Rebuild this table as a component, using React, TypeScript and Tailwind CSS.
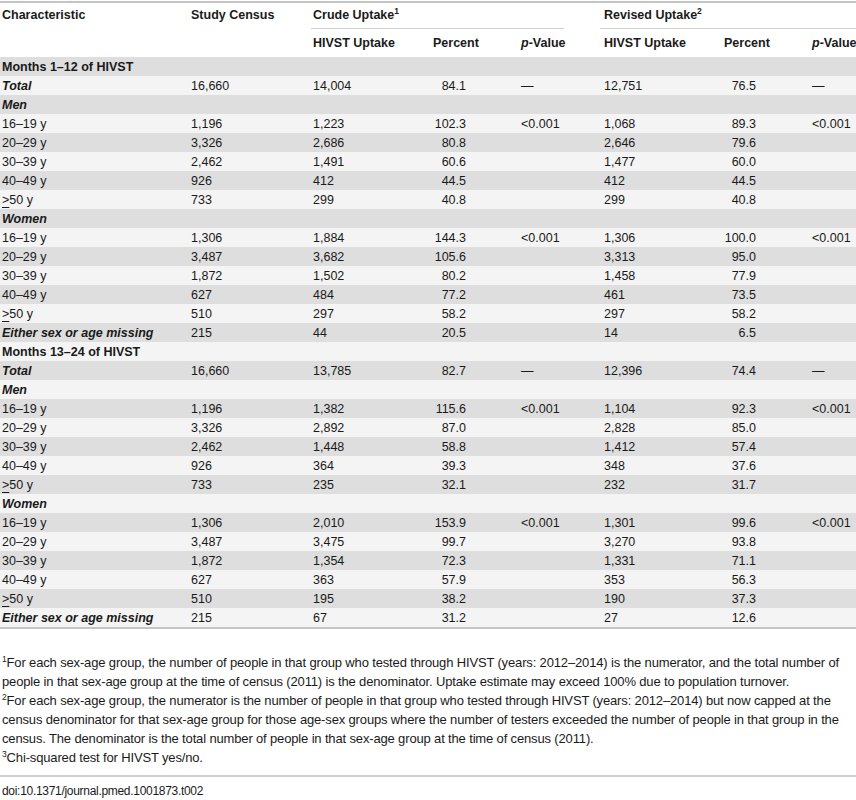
const cols = 'grid grid-cols-[189px_122px_120px_88px_83px_120px_88px_46px]'

type Row =
  | { kind: 'section'; label: string }
  | { kind: 'group'; label: string }
  | { kind: 'data'; label: string; bold?: boolean; vals: string[] }

const rows: Row[] = [
  { kind: 'section', label: 'Months 1–12 of HIVST' },
  { kind: 'data', label: 'Total', bold: true, vals: ['16,660', '14,004', '84.1', '—', '12,751', '76.5', '—'] },
  { kind: 'group', label: 'Men' },
  { kind: 'data', label: '16–19 y', vals: ['1,196', '1,223', '102.3', '<0.001', '1,068', '89.3', '<0.001'] },
  { kind: 'data', label: '20–29 y', vals: ['3,326', '2,686', '80.8', '', '2,646', '79.6', ''] },
  { kind: 'data', label: '30–39 y', vals: ['2,462', '1,491', '60.6', '', '1,477', '60.0', ''] },
  { kind: 'data', label: '40–49 y', vals: ['926', '412', '44.5', '', '412', '44.5', ''] },
  { kind: 'data', label: '≥50 y', vals: ['733', '299', '40.8', '', '299', '40.8', ''] },
  { kind: 'group', label: 'Women' },
  { kind: 'data', label: '16–19 y', vals: ['1,306', '1,884', '144.3', '<0.001', '1,306', '100.0', '<0.001'] },
  { kind: 'data', label: '20–29 y', vals: ['3,487', '3,682', '105.6', '', '3,313', '95.0', ''] },
  { kind: 'data', label: '30–39 y', vals: ['1,872', '1,502', '80.2', '', '1,458', '77.9', ''] },
  { kind: 'data', label: '40–49 y', vals: ['627', '484', '77.2', '', '461', '73.5', ''] },
  { kind: 'data', label: '≥50 y', vals: ['510', '297', '58.2', '', '297', '58.2', ''] },
  { kind: 'data', label: 'Either sex or age missing', bold: true, vals: ['215', '44', '20.5', '', '14', '6.5', ''] },
  { kind: 'section', label: 'Months 13–24 of HIVST' },
  { kind: 'data', label: 'Total', bold: true, vals: ['16,660', '13,785', '82.7', '—', '12,396', '74.4', '—'] },
  { kind: 'group', label: 'Men' },
  { kind: 'data', label: '16–19 y', vals: ['1,196', '1,382', '115.6', '<0.001', '1,104', '92.3', '<0.001'] },
  { kind: 'data', label: '20–29 y', vals: ['3,326', '2,892', '87.0', '', '2,828', '85.0', ''] },
  { kind: 'data', label: '30–39 y', vals: ['2,462', '1,448', '58.8', '', '1,412', '57.4', ''] },
  { kind: 'data', label: '40–49 y', vals: ['926', '364', '39.3', '', '348', '37.6', ''] },
  { kind: 'data', label: '≥50 y', vals: ['733', '235', '32.1', '', '232', '31.7', ''] },
  { kind: 'group', label: 'Women' },
  { kind: 'data', label: '16–19 y', vals: ['1,306', '2,010', '153.9', '<0.001', '1,301', '99.6', '<0.001'] },
  { kind: 'data', label: '20–29 y', vals: ['3,487', '3,475', '99.7', '', '3,270', '93.8', ''] },
  { kind: 'data', label: '30–39 y', vals: ['1,872', '1,354', '72.3', '', '1,331', '71.1', ''] },
  { kind: 'data', label: '40–49 y', vals: ['627', '363', '57.9', '', '353', '56.3', ''] },
  { kind: 'data', label: '≥50 y', vals: ['510', '195', '38.2', '', '190', '37.3', ''] },
  { kind: 'data', label: 'Either sex or age missing', bold: true, vals: ['215', '67', '31.2', '', '27', '12.6', ''] },
]

const PHead = () => (
  <span>
    <i>p</i>-Value
  </span>
)

// the ≥ in the source is drawn as a ">" sitting on a rule
const Label = ({ text }: { text: string }) =>
  text.startsWith('≥') ? (
    <>
      <span className="underline underline-offset-[3px] decoration-1">&gt;</span>
      {text.slice(1)}
    </>
  ) : (
    <>{text}</>
  )

const Sup = ({ n }: { n: string }) => <sup className="text-[8.5px] -top-[5px]">{n}</sup>

const App = () => {
  return (
    <div className="w-[856px] h-[800px] overflow-hidden bg-white text-[12.5px] text-[#1a1a1a] font-['Liberation_Sans',Arial,sans-serif]">
      <div className="h-px" />
      <div className="border-t-2 border-[#c4c4c4]">
        {/* header */}
        <div className={`${cols} font-bold h-[25px] items-center`}>
          <div className="pl-[2px]">Characteristic</div>
          <div className="pl-[2px]">Study Census</div>
          <div className="col-span-3 pl-[2px]">
            Crude Uptake<Sup n="1" />
          </div>
          <div className="col-span-3 pl-[2px]">
            Revised Uptake<Sup n="2" />
          </div>
        </div>
        <div className="flex h-px">
          <div className="w-[311px]" />
          <div className="w-[253px] bg-[#d0d0d0]" />
          <div className="w-[36px]" />
          <div className="flex-1 bg-[#d0d0d0]" />
        </div>
        <div className={`${cols} font-bold h-[28px] items-center`}>
          <div />
          <div />
          <div className="pl-[2px]">HIVST Uptake</div>
          <div className="pl-[2px]">Percent</div>
          <div className="pl-[2px]">
            <PHead />
          </div>
          <div className="pl-[2px]">HIVST Uptake</div>
          <div className="pl-[2px]">Percent</div>
          <div className="pl-[2px] whitespace-nowrap">
            <PHead />
          </div>
        </div>

        {/* body */}
        {rows.map((row, i) => (
          <div
            key={i}
            className={`${cols} h-[19px] pt-px items-center ${i % 2 === 0 ? 'bg-[#dedede]' : 'bg-[#f4f4f4]'}`}
          >
            {row.kind === 'section' && <div className="col-span-8 pl-[2px] font-bold">{row.label}</div>}
            {row.kind === 'group' && <div className="col-span-8 pl-[2px] font-bold italic">{row.label}</div>}
            {row.kind === 'data' && (
              <>
                <div className={`pl-[2px] whitespace-nowrap ${row.bold ? 'font-bold italic' : ''}`}>
                  <Label text={row.label} />
                </div>
                <div className="pl-[2px]">{row.vals[0]}</div>
                <div className="pl-[2px]">{row.vals[1]}</div>
                <div className="text-right pr-[53px]">{row.vals[2]}</div>
                <div className="pl-[2px]">{row.vals[3]}</div>
                <div className="pl-[2px]">{row.vals[4]}</div>
                <div className="text-right pr-[54px]">{row.vals[5]}</div>
                <div className="pl-[2px] whitespace-nowrap">{row.vals[6]}</div>
              </>
            )}
          </div>
        ))}
      </div>
      <div className="h-[2px] bg-[#c4c4c4]" />

      {/* footnotes */}
      <div className="pt-[24px] pl-[2px] text-[13px] tracking-[-0.15px] leading-[19px] whitespace-nowrap">
        <p>
          <Sup n="1" />For each sex-age group, the number of people in that group who tested through HIVST (years: 2012–2014) is
          the numerator, and the total number of
          <br />
          people in that sex-age group at the time of census (2011) is the denominator. Uptake estimate may exceed 100% due
          to population turnover.
        </p>
        <p>
          <Sup n="2" />For each sex-age group, the numerator is the number of people in that group who tested through HIVST
          (years: 2012–2014) but now capped at the
          <br />
          census denominator for that sex-age group for those age-sex groups where the number of testers exceeded the number
          of people in that group in the
          <br />
          census. The denominator is the total number of people in that sex-age group at the time of census (2011).
        </p>
        <p>
          <Sup n="3" />Chi-squared test for HIVST yes/no.
        </p>
      </div>
      <div className="mt-[8px] h-[2px] bg-[#cfcfcf]" />
      <div className="pt-[6px] pl-[2px] text-[12px] tracking-[-0.3px] leading-[16px]">doi:10.1371/journal.pmed.1001873.t002</div>
    </div>
  )
}

export default App
